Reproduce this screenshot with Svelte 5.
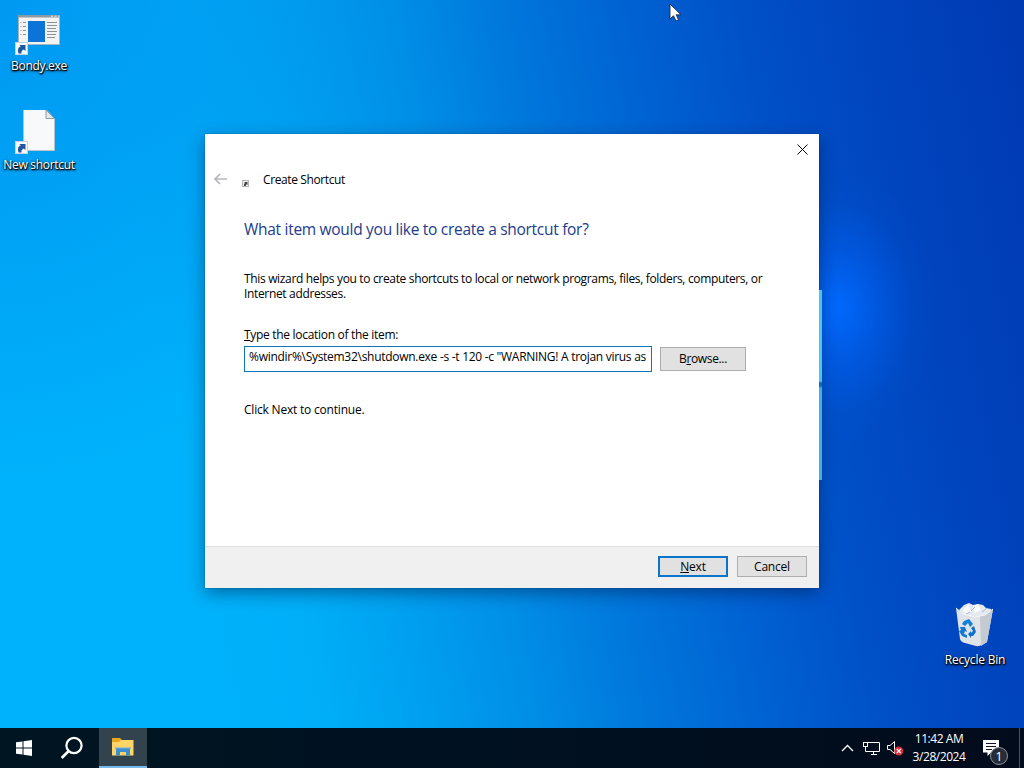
<script>
	let location = '%windir%\\System32\\shutdown.exe -s -t 120 -c "WARNING! A trojan virus as';

	const clock = {
		time: '11:42 AM',
		date: '3/28/2024'
	};

	const notifications = 1;
</script>

{#snippet shortcutArrow()}
	<rect x="0.5" y="27.5" width="12" height="12" fill="#f8fbff" stroke="#c3d3e2" />
	<path d="M3.5 38.500C2.200 34 3.500 32 5.800 31.500L4.300 30H10.500V36L8.800 34.400C7 35.200 6.200 36.200 6.500 38.500z" fill="#1f589f" />
{/snippet}

<div class="screen">
	<main class="desktop">

		<div class="beam"></div>

		<div class="shortcut bondy">
			<svg width="46" height="40" viewBox="0 0 46 40">
				<rect x="3.500" y="0.500" width="41" height="29" fill="#f3f3f2" stroke="#a9b3ba" />
				<path d="M3 1.200h42" stroke="#8d9aa3" stroke-width="2.400" />
				<path d="M36 1.200h2M39.500 1.200h2M43 1.200h1.500" stroke="#e9eef1" />
				<rect x="13" y="6" width="17" height="21" fill="#0b74d6" />
				<path d="M5.500 7.500h1M8 7.500h3M5.500 11.500h1M8 11.500h3M5.500 15.500h1M8 15.500h3M5.500 19.500h1M8 19.500h3" stroke="#8b9298" />
				<path d="M32 7.500h10M32 10.500h10M32 13.500h9M32 16.500h10M32 19.500h9M32 22.500h8" stroke="#8b9298" />
				{@render shortcutArrow()}
			</svg>
			<span class="label">Bondy.exe</span>
		</div>

		<div class="shortcut file">
			<svg width="46" height="44" viewBox="0 -4 46 44">
				<path d="M8.500 -4.500H31L39.500 4.500V36.500H8.500z" fill="#f8f9fa" stroke="#b8c2c9" />
				<path d="M31 -4V4.500h8.500z" fill="#e5e9ec" stroke="#919ba2" />
				{@render shortcutArrow()}
			</svg>
			<span class="label">New shortcut</span>
		</div>

		<div class="shortcut bin">
			<svg width="42" height="46" viewBox="0 0 42 46">
				<path d="M5 8l5-5 5-2 4 2 5-1 5 1 3 3 5 1-1 6-15 3-12-2z" fill="#e6eaf0" />
				<path d="M8 8l6-5 3 6-5 3zM19 4l5-2 3 6-6 3z" fill="#fafcff" />
				<path d="M17 9l4-4M28 10l5-4M12 12l4-2" stroke="#aab6c8" />
				<path d="M2 6l4 31q1 3 5 4l11 3q3 .500 6-1l5-3L39 7l-8 6-10 2L9 12z" fill="#e0e3e7" />
				<path d="M26 14l5-1 8-6-6 33-6 4z" fill="#c4cad2" />
				<path d="M2 6l7 6 12 3 10-2 8-6" fill="none" stroke="#f2f5f8" />
				<path d="M10 19l5-2 4 5-3 3-2-4-3 3-3-2z" fill="#1180d8" />
				<path d="M6 25l5 0 2 5-2-1-1 3 3 1v3l-5-2-3-5 2-1z" fill="#1479cf" />
				<path d="M17 26l3-2 2 6-3 4h-2v2l-3-4 3-3v2l2-2z" fill="#0f72ca" />
			</svg>
			<span class="label">Recycle Bin</span>
		</div>

		<section class="wizard">
			<div class="titlebar">
				<button class="close" aria-label="Close">
					<svg width="11" height="11" viewBox="0 0 11 11"><path d="M0.500 0.500l10 10M10.500 0.500l-10 10" stroke="#000" /></svg>
				</button>
			</div>

			<header>
				<svg class="back" width="13" height="12" viewBox="0 0 13 12"><path d="M6 1L1 6l5 5M1 6h12" fill="none" stroke="#b9b6bd" stroke-width="1.700" /></svg>
				<svg class="mini" width="7" height="7" viewBox="0 0 7 7">
					<rect x="0.500" y="0.500" width="6" height="6" fill="#eee" stroke="#b6b6b6" />
					<path d="M2 6V4l1-1-.800-1H5.500v3L4.500 4.200 3.500 6z" fill="#3e464e" />
				</svg>
				<span>Create Shortcut</span>
			</header>

			<div class="content">
				<h1>What item would you like to create a shortcut for?</h1>
				<p class="intro">This wizard helps you to create shortcuts to local or network programs, files, folders, computers, or<br />Internet addresses.</p>
				<label for="location"><u>T</u>ype the location of the item:</label>
				<div class="row">
					<input id="location" type="text" spellcheck="false" bind:value={location} />
					<button class="button browse">B<u>r</u>owse...</button>
				</div>
				<p class="hint">Click Next to continue.</p>
			</div>

			<footer>
				<button class="button next"><u>N</u>ext</button>
				<button class="button cancel">Cancel</button>
			</footer>
		</section>

		<svg class="cursor" width="13" height="20" viewBox="0 0 13 20">
			<path d="M1 1v15l3.500-3.300L7 18l2.500-1.200-2.300-5H12z" fill="#fff" stroke="#1b2c48" stroke-width="0.900" />
		</svg>
	</main>

	<nav class="taskbar">
		<div class="task">
			<svg width="16" height="16" viewBox="0 0 16 16"><path d="M0 2.300L6.500 1.400V7.500H0zM7.500 1.200L16 0v7.500H7.500zM0 8.500h6.500v6.100L0 13.700zM7.500 8.500H16V16l-8.500-1.200z" fill="#fff" /></svg>
		</div>
		<div class="task">
			<svg width="24" height="24" viewBox="0 0 24 24"><circle cx="14" cy="9.500" r="7.600" fill="none" stroke="#fff" stroke-width="2.200" /><path d="M8.700 15L1.700 22" stroke="#fff" stroke-width="2.600" /></svg>
		</div>
		<div class="task active">
			<svg width="22" height="18" viewBox="0 0 22 18">
				<path d="M0 0h8l2 2h11v15H0z" fill="#e9a820" />
				<path d="M0 4h7l2-2h12.500v15.500H0z" fill="#ffd568" />
				<path d="M4 17.500V10h14v7.500h-4V14H8v3.500z" fill="#3b8fcf" />
				<path d="M3 10h16" stroke="#77aed0" stroke-width="1.200" />
			</svg>
		</div>

		<div class="tray">
			<svg class="chevron" width="13" height="8" viewBox="0 0 13 8"><path d="M1 7l5.500-5.500L12 7" fill="none" stroke="#fff" stroke-width="1.400" /></svg>
			<svg class="network" width="17" height="15" viewBox="0 0 17 15">
				<path d="M4.500 1.500h12v9H4.500M8 13.500h6M10.500 10.500v3M2.500 6v4.500H6" fill="none" stroke="#fff" />
				<rect x="0.500" y="1.500" width="4" height="4" fill="#020d1c" stroke="#fff" />
			</svg>
			<svg class="volume" width="17" height="16" viewBox="0 0 17 16">
				<path d="M0.500 5.500H3L7.500 1.500v12L3 9.500H0.500z" fill="none" stroke="#fff" />
				<circle cx="11.800" cy="11" r="4.500" fill="#d92d38" />
				<path d="M9.800 9l4 4m0-4l-4 4" stroke="#fff" stroke-width="1.200" />
			</svg>
			<div class="clock">
				<span>{clock.time}</span>
				<span>{clock.date}</span>
			</div>
			<div class="action">
				<svg width="16" height="16" viewBox="0 0 16 16">
					<path d="M0 0h16v12.500H8L4.500 16v-3.500H0z" fill="#fff" />
					<path d="M3 3.500h10M3 6.500h10M3 9.500h6" stroke="#0b1628" />
				</svg>
				<span class="badge">{notifications}</span>
			</div>
			<div class="peek"></div>
		</div>
	</nav>
</div>

<style>
	:global(body) {
		overflow: hidden;
	}
	.screen {
		width: 1024px;
		height: 768px;
		display: flex;
		flex-direction: column;
		font-family: "Open Sans", "Noto Sans", sans-serif;
		font-size: 12px;
		color: #000;
	}
	svg {
		display: block;
		flex: none;
	}
	p, h1 {
		margin: 0;
		font-weight: 400;
	}
	button, input {
		font: inherit;
		color: inherit;
		letter-spacing: inherit;
		box-sizing: border-box;
		border-radius: 0;
		margin: 0;
	}
	u {
		text-underline-offset: 1px;
		text-decoration-thickness: 1px;
	}

	/* desktop */

	.desktop {
		position: relative;
		height: 728px;
		overflow: hidden;
		background:
			radial-gradient(ellipse 100px 140px at 838px 308px, rgba(0,106,255,0.95), rgba(0,98,244,0.5) 42%, rgba(0,88,225,0.14) 75%, transparent),
			radial-gradient(ellipse 420px 480px at 0 0, rgba(0,142,238,0.7), rgba(0,142,238,0.4) 50%, transparent),
			linear-gradient(79deg, #00b2fb 0%, #00b2fb 20%, #00aef8 28%, #00a3f1 35%, #008ee7 46%, #0078dc 55%, #0062d2 66%, #0050c8 76%, #0045be 86%, #0039b2 100%);
	}
	.beam {
		position: absolute;
		left: 819px;
		top: 290px;
		width: 3px;
		height: 190px;
		z-index: 1;
		background: linear-gradient(#48c7ed 0 91px, #086fae 93px 96px, #3fb0e4 98px);
	}
	.shortcut {
		position: absolute;
		display: flex;
		flex-direction: column;
		align-items: center;
		width: 78px;
	}
	.shortcut.bondy {
		left: 0;
		top: 15px;
	}
	.shortcut.file {
		left: 0;
		top: 110px;
	}
	.shortcut.bin {
		left: 936px;
		top: 602px;
	}
	.bondy svg, .file svg {
		margin-right: 2px;
	}
	.label {
		margin-top: 3px;
		line-height: 16px;
		color: #fff;
		white-space: nowrap;
		letter-spacing: -0.3px;
		text-shadow: 1px 1px 1px #000, 0 1px 2px #000, 0 1px 3px rgba(0,0,0,0.8);
	}
	.bin .label {
		margin-top: 4px;
		letter-spacing: -0.2px;
	}
	.cursor {
		position: absolute;
		left: 669px;
		top: 3px;
	}

	/* wizard window */

	.wizard {
		position: absolute;
		left: 205px;
		top: 134px;
		width: 614px;
		height: 454px;
		display: flex;
		flex-direction: column;
		background: #fff;
		letter-spacing: -0.2px;
		box-shadow: 0 0 1px rgba(0,40,90,0.7), 0 5px 16px rgba(0,20,60,0.45);
	}
	.titlebar {
		display: flex;
		justify-content: flex-end;
		height: 30px;
	}
	.close {
		display: flex;
		align-items: center;
		padding: 0 11px 0 10px;
		border: 0;
		background: none;
	}
	header {
		display: flex;
		align-items: center;
		height: 30px;
		padding-left: 9px;
		letter-spacing: -0.39px;
	}
	.back {
		margin-top: -1px;
	}
	.mini {
		margin: 8px 14px 0 15px;
	}
	.content {
		flex: 1;
		padding: 23px 39px 0;
	}
	h1 {
		font-size: 15.5px;
		line-height: 24px;
		color: #1b3c8f;
		letter-spacing: -0.29px;
		white-space: nowrap;
	}
	.intro {
		margin-top: 30px;
		line-height: 15px;
		letter-spacing: -0.34px;
		white-space: nowrap;
	}
	label {
		display: block;
		margin-top: 26px;
		line-height: 16px;
		letter-spacing: -0.3px;
	}
	.row {
		display: flex;
		align-items: center;
		gap: 8px;
		margin-top: 3px;
	}
	input {
		width: 408px;
		height: 26px;
		padding: 0 2px 5px 4px;
		border: 1px solid #0d76ba;
		background: #fff;
		outline: 0;
		letter-spacing: -0.285px;
	}
	.button {
		display: block;
		padding: 0;
		border: 1px solid #adadad;
		background: #e1e1e1;
		text-align: center;
	}
	.browse {
		width: 86px;
		height: 24px;
		padding-bottom: 1px;
		letter-spacing: -0.35px;
	}
	.hint {
		margin-top: 30px;
		line-height: 16px;
	}
	footer {
		display: flex;
		align-items: flex-start;
		justify-content: flex-end;
		gap: 9px;
		height: 32px;
		padding: 9px 12px 0 0;
		border-top: 1px solid #dfdfdf;
		background: #f0f0f0;
	}
	.next, .cancel {
		width: 70px;
		height: 21px;
		line-height: 19px;
	}
	.next {
		border: 2px solid #0b74c8;
		line-height: 17px;
	}

	/* taskbar */

	.taskbar {
		display: flex;
		height: 40px;
		background: linear-gradient(90deg, #001522, #001020 60%, #020b1b);
		color: #fff;
	}
	.task {
		display: flex;
		align-items: center;
		justify-content: center;
		width: 48px;
		box-sizing: border-box;
	}
	.task.active {
		margin-left: 3px;
		background: #33434e;
		border-bottom: 2px solid #76b9ed;
	}
	.tray {
		display: flex;
		align-items: center;
		margin-left: auto;
	}
	.network {
		margin-left: 9px;
	}
	.volume {
		margin-left: 7px;
	}
	.clock {
		display: flex;
		flex-direction: column;
		align-items: center;
		width: 70px;
		line-height: 18px;
		letter-spacing: -0.45px;
	}
	.action {
		position: relative;
		margin: 0 20px 0 9px;
	}
	.badge {
		position: absolute;
		left: 7px;
		top: 7px;
		width: 16px;
		height: 16px;
		border: 1px solid #8b929b;
		border-radius: 50%;
		background: #262d38;
		font-size: 13px;
		line-height: 16px;
		text-align: center;
	}
	.peek {
		width: 4px;
		height: 40px;
		border-left: 1px solid #46505d;
	}
</style>
